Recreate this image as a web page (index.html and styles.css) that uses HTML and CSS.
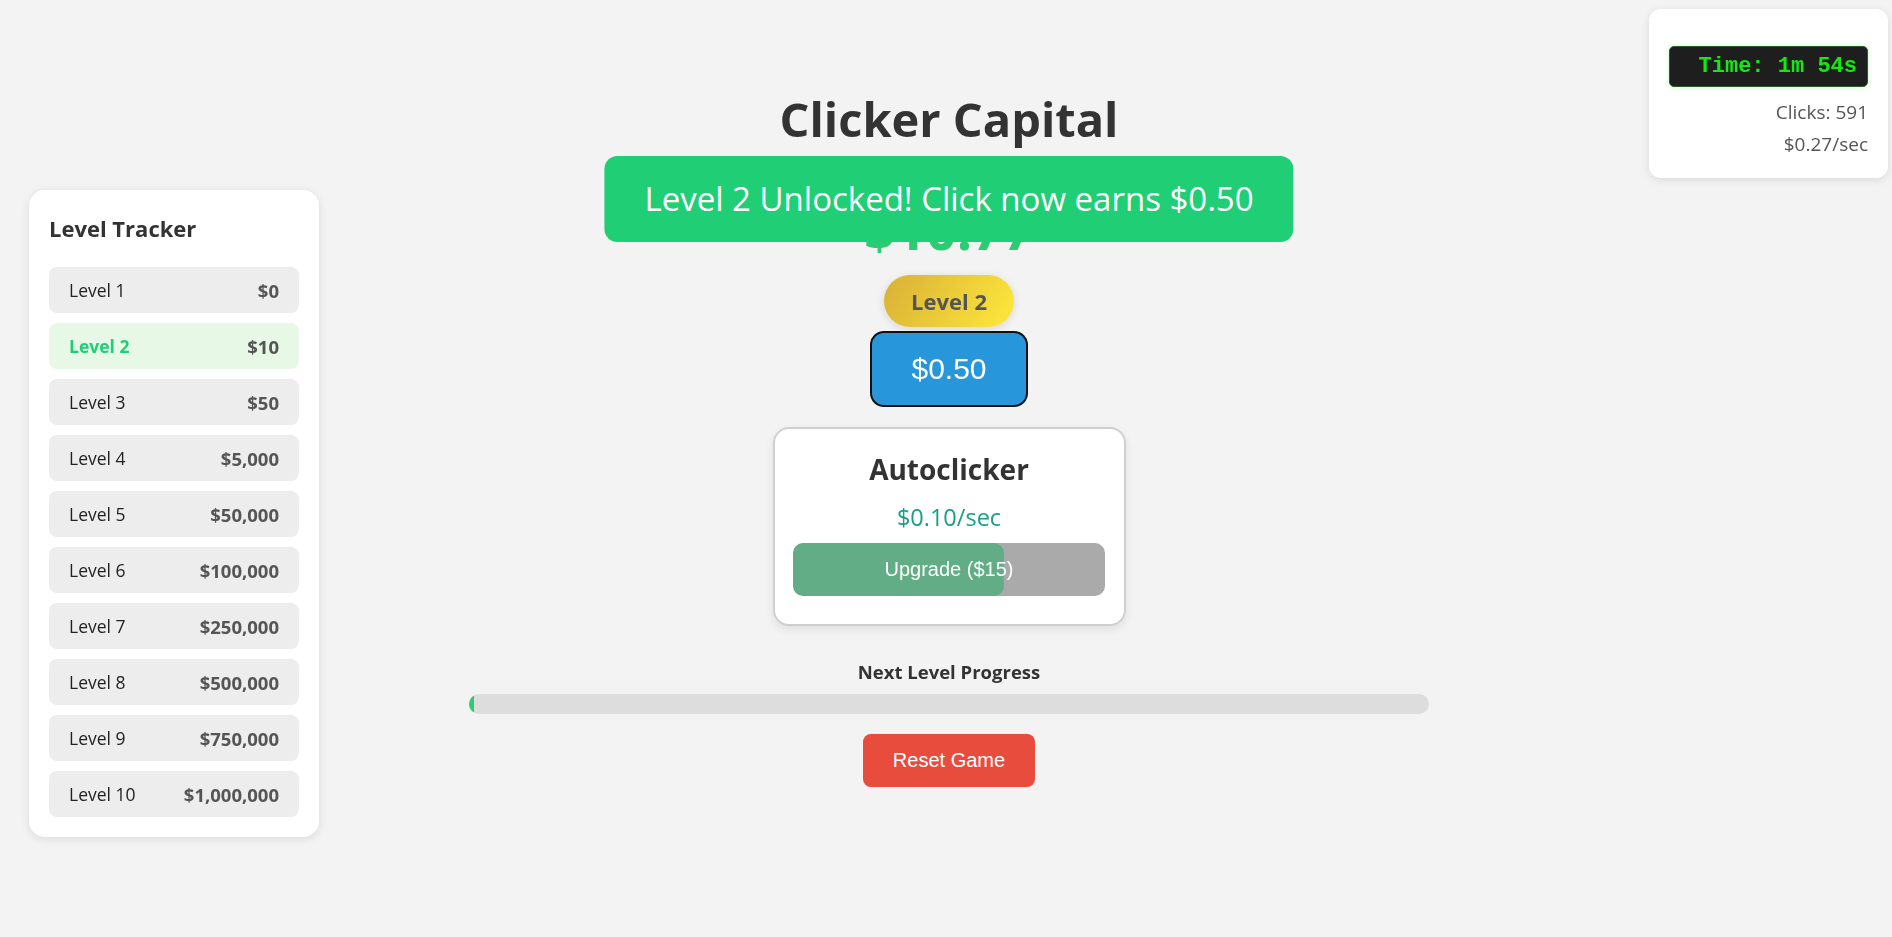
FILE: index.html
```html
<!DOCTYPE html>
<html lang="en">
<head>
<meta charset="utf-8">
<title>Clicker Capital</title>
<link rel="stylesheet" href="styles.css">
</head>
<body>
<aside class="tracker">
  <h3 class="tracker-title">Level Tracker</h3>
  <ul class="level-list">
    <li class="level-row"><span class="level-name">Level 1</span><span class="level-cost">$0</span></li>
    <li class="level-row active"><span class="level-name">Level 2</span><span class="level-cost">$10</span></li>
    <li class="level-row"><span class="level-name">Level 3</span><span class="level-cost">$50</span></li>
    <li class="level-row"><span class="level-name">Level 4</span><span class="level-cost">$5,000</span></li>
    <li class="level-row"><span class="level-name">Level 5</span><span class="level-cost">$50,000</span></li>
    <li class="level-row"><span class="level-name">Level 6</span><span class="level-cost">$100,000</span></li>
    <li class="level-row"><span class="level-name">Level 7</span><span class="level-cost">$250,000</span></li>
    <li class="level-row"><span class="level-name">Level 8</span><span class="level-cost">$500,000</span></li>
    <li class="level-row"><span class="level-name">Level 9</span><span class="level-cost">$750,000</span></li>
    <li class="level-row"><span class="level-name">Level 10</span><span class="level-cost">$1,000,000</span></li>
  </ul>
</aside>

<aside class="stats">
  <div class="timer">Time: 1m 54s</div>
  <div class="stat-line">Clicks: 591</div>
  <div class="stat-line">$0.27/sec</div>
</aside>

<main class="main">
  <div class="game">
    <h1 class="title">Clicker Capital</h1>
    <div class="money">$10.77</div>
    <div class="badge">Level 2</div>
    <button class="click-btn">$0.50</button>
    <section class="card">
      <h2 class="card-title">Autoclicker</h2>
      <div class="card-rate">$0.10/sec</div>
      <button class="upgrade-btn">
        <span class="upgrade-fill" style="width: 67.7%"></span>
        <span class="upgrade-label">Upgrade ($15)</span>
      </button>
    </section>
    <div class="progress-label">Next Level Progress</div>
    <div class="progress-track"><div class="progress-fill" style="width: 0.5%"></div></div>
    <button class="reset-btn">Reset Game</button>
    <div class="notification">Level 2 Unlocked! Click now earns $0.50</div>
  </div>
</main>
</body>
</html>
```

FILE: styles.css
```css
* { box-sizing: border-box; }

body {
  margin: 0;
  background: #f3f3f3;
  font-family: "Open Sans", "Noto Sans", sans-serif;
  color: #333;
}

/* Level tracker sidebar */
.tracker {
  position: fixed;
  left: 29px;
  top: 190px;
  width: 290px;
  padding: 20px;
  background: #fff;
  border-radius: 16px;
  box-shadow: 0 2px 10px rgba(0, 0, 0, 0.1);
}
.tracker-title {
  margin: 4px 0 25px;
  font-size: 22px;
  line-height: 28px;
  font-weight: 700;
  color: #333;
}
.level-list {
  list-style: none;
  margin: 0;
  padding: 0;
  display: flex;
  flex-direction: column;
  gap: 10px;
}
.level-row {
  height: 46px;
  padding: 0 20px;
  display: flex;
  align-items: center;
  justify-content: space-between;
  background: #ededed;
  border-radius: 8px;
  font-size: 17.5px;
}
.level-name { color: #222; }
.level-cost { color: #555; font-weight: 700; font-size: 18.5px; }
.level-row.active { background: #e7f8e7; }
.level-row.active .level-name { color: #1fce75; font-weight: 700; }

/* Stats panel */
.stats {
  position: fixed;
  top: 9px;
  right: 4px;
  width: 239px;
  padding: 37px 20px 18px;
  background: #fff;
  border-radius: 12px;
  box-shadow: 0 2px 10px rgba(0, 0, 0, 0.1);
  text-align: right;
}
.timer {
  height: 41px;
  padding: 0 10px;
  background: #1e1e1e;
  border: 1px solid #2d5a2d;
  border-radius: 5px;
  box-shadow: 0 0 5px rgba(0, 255, 0, 0.25);
  font-family: "Liberation Mono", monospace;
  font-weight: 700;
  font-size: 22px;
  line-height: 39px;
  color: #12ea12;
  margin-bottom: 9px;
}
.stat-line {
  font-size: 19px;
  line-height: 32px;
  color: #555;
}

/* Main column */
.main {
  padding: 89px 0 40px 6px;
}
.game {
  position: relative;
  display: flex;
  flex-direction: column;
  align-items: center;
}
.title {
  margin: 0;
  font-size: 47px;
  line-height: 60px;
  font-weight: 700;
  color: #333;
}
.money {
  margin-top: 49px;
  font-size: 54px;
  line-height: 62px;
  font-weight: 700;
  color: #2ecc71;
}
.badge {
  margin-top: 15px;
  height: 52px;
  padding: 0 27px;
  line-height: 52px;
  border-radius: 26px;
  background: linear-gradient(120deg, #d8b036, #ffe83c);
  box-shadow: 0 2px 8px rgba(0, 0, 0, 0.12);
  font-size: 22px;
  font-weight: 700;
  color: #555;
}
.click-btn {
  margin-top: 4px;
  padding: 18px 39px 19px;
  border: 2px solid #111;
  border-radius: 14px;
  background: #2896da;
  color: #fff;
  font-family: "Liberation Sans", Arial, sans-serif;
  font-size: 30px;
  line-height: 35px;
}
.card {
  margin-top: 20px;
  width: 353px;
  padding: 22px 20px 28px;
  background: #fff;
  border: 2px solid #cfcfcf;
  border-radius: 16px;
  box-shadow: 0 4px 10px rgba(0, 0, 0, 0.08);
  display: flex;
  flex-direction: column;
  align-items: center;
}
.card-title {
  margin: 0;
  font-size: 28px;
  line-height: 36px;
  font-weight: 700;
  color: #333;
}
.card-rate {
  margin-top: 14px;
  font-size: 23.5px;
  line-height: 32px;
  color: #16a085;
}
.upgrade-btn {
  position: relative;
  margin-top: 10px;
  width: 312px;
  height: 53px;
  padding: 0;
  border: none;
  border-radius: 10px;
  background: #aaa;
  overflow: hidden;
  color: #fff;
  font-family: "Liberation Sans", Arial, sans-serif;
  font-size: 20px;
}
.upgrade-fill {
  position: absolute;
  left: 0;
  top: 0;
  bottom: 0;
  background: #62ad86;
  border-radius: 10px;
}
.upgrade-label {
  position: relative;
}
.progress-label {
  margin-top: 34px;
  font-size: 18.5px;
  line-height: 24px;
  font-weight: 700;
  color: #333;
}
.progress-track {
  margin-top: 10px;
  width: 960px;
  height: 20px;
  background: #ddd;
  border-radius: 10px;
  overflow: hidden;
}
.progress-fill {
  height: 100%;
  background: #2ecc71;
}
.reset-btn {
  margin-top: 20px;
  padding: 15px 30px;
  border: none;
  border-radius: 8px;
  background: #e74c3c;
  color: #fff;
  font-family: "Liberation Sans", Arial, sans-serif;
  font-size: 20px;
  line-height: 23px;
}

/* Notification toast over the money display */
.notification {
  position: absolute;
  top: 67px;
  left: 50%;
  transform: translateX(-50%);
  padding: 20px 40px;
  background: #1fce75;
  color: #fff;
  border-radius: 13px;
  font-size: 33px;
  line-height: 46px;
  white-space: nowrap;
}
```
